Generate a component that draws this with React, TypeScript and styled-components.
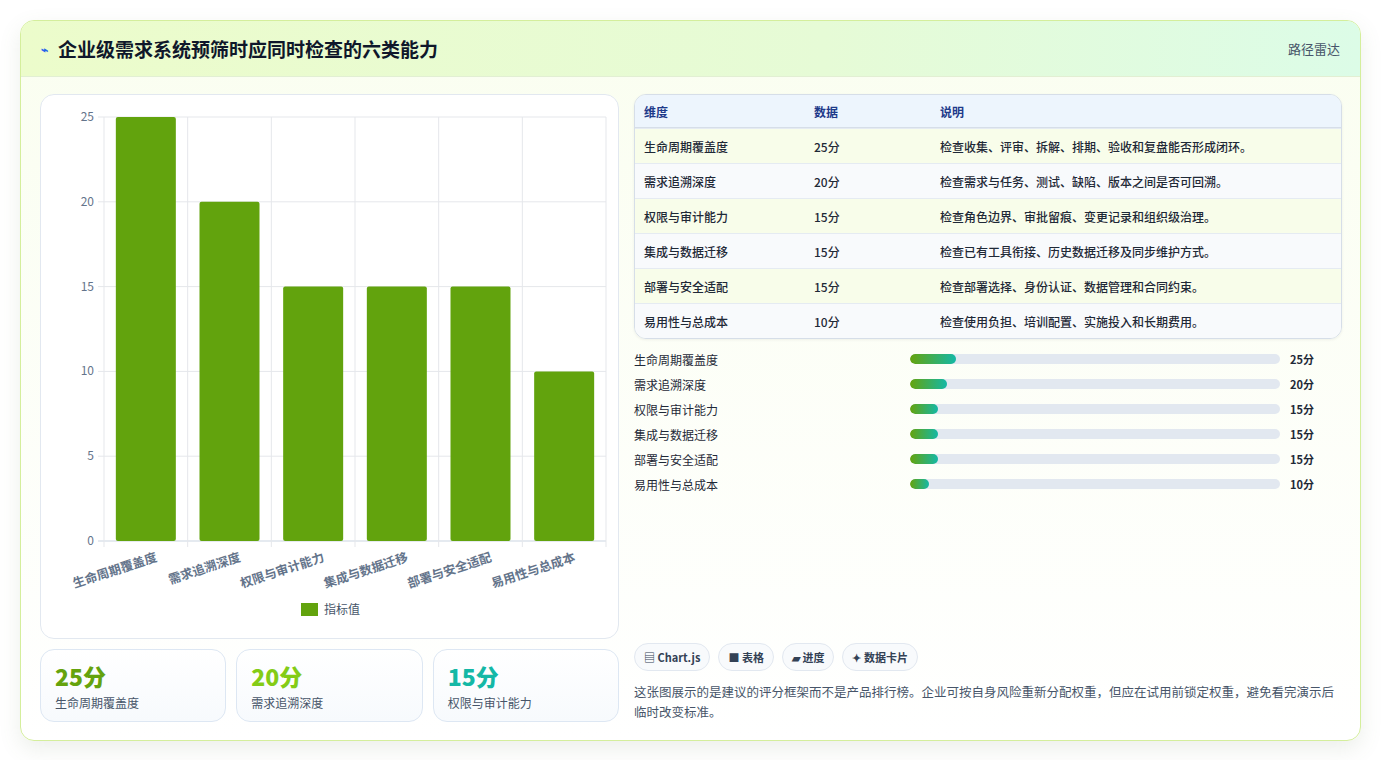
import { FC } from "react";
import styled, { createGlobalStyle } from "styled-components";

const GlobalStyle = createGlobalStyle`
  body {
    margin: 0;
    background: #fff;
    font-family: "Noto Sans CJK SC", "Noto Sans", sans-serif;
  }
`;

const items = [
  { name: "生命周期覆盖度", value: 25, desc: "检查收集、评审、拆解、排期、验收和复盘能否形成闭环。" },
  { name: "需求追溯深度", value: 20, desc: "检查需求与任务、测试、缺陷、版本之间是否可回溯。" },
  { name: "权限与审计能力", value: 15, desc: "检查角色边界、审批留痕、变更记录和组织级治理。" },
  { name: "集成与数据迁移", value: 15, desc: "检查已有工具衔接、历史数据迁移及同步维护方式。" },
  { name: "部署与安全适配", value: 15, desc: "检查部署选择、身份认证、数据管理和合同约束。" },
  { name: "易用性与总成本", value: 10, desc: "检查使用负担、培训配置、实施投入和长期费用。" },
];

const Page = styled.div`
  padding: 20px 20px 20px 20px;
`;

const Card = styled.div`
  border: 1px solid #d4ee9c;
  border-radius: 14px;
  overflow: hidden;
  background: linear-gradient(180deg, #fafef0 0%, #ffffff 100%);
  box-shadow: 0 8px 22px rgba(100, 120, 80, 0.12);
`;

const Header = styled.div`
  height: 55px;
  display: flex;
  align-items: center;
  justify-content: space-between;
  padding: 0 20px;
  background: linear-gradient(90deg, #ecfccb 0%, #e6fbd6 60%, #dcfce7 100%);
  border-bottom: 1px solid #e2efd3;
`;

const Title = styled.h1`
  margin: 0;
  font-size: 19px;
  font-weight: 700;
  color: #0f172a;
  display: flex;
  align-items: center;
  gap: 10px;
`;

const Glyph = styled.span`
  color: #2563eb;
  font-size: 12px;
`;

const HeaderTag = styled.span`
  font-size: 13px;
  color: #475569;
`;

const Body = styled.div`
  display: grid;
  grid-template-columns: 579px 708px;
  gap: 15px;
  padding: 17px 19px 18px 19px;
`;

const LeftCol = styled.div`
  display: flex;
  flex-direction: column;
  gap: 10px;
`;

const ChartBox = styled.div`
  height: 543px;
  background: #fff;
  border: 1px solid #e2e8f0;
  border-radius: 14px;
`;

const Stats = styled.div`
  display: grid;
  grid-template-columns: repeat(3, 1fr);
  gap: 10px;
`;

const Stat = styled.div`
  height: 73px;
  box-sizing: border-box;
  padding: 10px 14px;
  border: 1px solid #dde7f3;
  border-radius: 14px;
  background: linear-gradient(180deg, #ffffff, #f7fafd);
`;

const StatValue = styled.div<{ $c: string }>`
  font-size: 23px;
  font-weight: 800;
  color: ${(p) => p.$c};
  line-height: 32px;
`;

const StatLabel = styled.div`
  font-size: 12px;
  color: #475569;
  margin-top: 2px;
`;

const RightCol = styled.div`
  display: flex;
  flex-direction: column;
`;

const Table = styled.table`
  width: 100%;
  border-collapse: separate;
  border-spacing: 0;
  border: 1px solid #d6dee8;
  border-radius: 12px;
  overflow: hidden;
  font-size: 12px;
  box-shadow: 0 1px 3px rgba(0, 0, 0, 0.06);
`;

const Th = styled.th`
  text-align: left;
  font-weight: 600;
  color: #1e3a8a;
  background: #edf5fd;
  height: 32px;
  padding: 0 9px;
  border-bottom: 1px solid #d6dee8;
`;

const Tr = styled.tr<{ $alt: boolean }>`
  background: ${(p) => (p.$alt ? "#f8fafc" : "#f8fdea")};
`;

const Td = styled.td<{ $w?: string }>`
  height: 34px;
  padding: 0 9px;
  color: #1f2937;
  font-weight: 500;
  width: ${(p) => p.$w || "auto"};
  border-top: 1px solid #e5ebf2;
`;

const Bars = styled.div`
  display: flex;
  flex-direction: column;
  gap: 7px;
  margin-top: 11px;
`;

const BarRow = styled.div`
  display: grid;
  grid-template-columns: 266px 370px 1fr;
  align-items: center;
  gap: 10px;
  font-size: 12px;
  height: 18px;
  color: #1f2937;
`;

const Track = styled.div`
  height: 10px;
  border-radius: 5px;
  background: #e2e8f0;
  overflow: hidden;
`;

const Fill = styled.div`
  height: 100%;
  border-radius: 5px;
  background: linear-gradient(90deg, #65a30d, #14b8a6);
`;

const Score = styled.span`
  font-weight: 700;
  font-size: 11px;
`;

const Chips = styled.div`
  display: flex;
  gap: 8px;
  margin-top: auto;
`;

const Chip = styled.span`
  height: 28px;
  box-sizing: border-box;
  padding: 0 9px;
  display: inline-flex;
  align-items: center;
  border: 1px solid #e2e8f0;
  border-radius: 14px;
  background: #f8fafc;
  font-size: 11px;
  font-weight: 600;
  color: #334155;
`;

const Note = styled.p`
  margin: 11px 0 0;
  font-size: 12.5px;
  line-height: 20px;
  color: #475569;
`;

const W = 578;
const L = 63;
const R = 565;
const T = 22;
const B = 446;
const cw = (R - L) / 6;
const y = (v: number) => B - (v / 25) * (B - T);

const BarChart: FC = () => (
  <svg width={W} height={541} style={{ display: "block" }}>
    {[0, 5, 10, 15, 20, 25].map((v) => (
      <g key={v}>
        <line x1={L - 6} x2={R} y1={y(v)} y2={y(v)} stroke={v === 0 ? "#cbd5e1" : "#e5e7eb"} />
        <text x={L - 10} y={y(v) + 4} textAnchor="end" fontSize="12" fill="#64748b">{v}</text>
      </g>
    ))}
    {Array.from({ length: 7 }).map((_, i) => (
      <line key={i} x1={L + i * cw} x2={L + i * cw} y1={T} y2={B + 6} stroke="#e5e7eb" />
    ))}
    {items.map((it, i) => {
      const cx = L + cw * i + cw / 2;
      return (
        <g key={it.name}>
          <rect x={cx - 30} y={y(it.value)} width={60} height={B - y(it.value)} fill="#62a30d" rx="2" />
          <text
            x={cx + 12}
            y={B + 20}
            textAnchor="end"
            fontSize="12.5"
            fontWeight="600"
            fill="#64748b"
            transform={`rotate(-18 ${cx + 12} ${B + 20})`}
          >
            {it.name}
          </text>
        </g>
      );
    })}
    <rect x={260} y={508} width={17} height={13} fill="#62a30d" />
    <text x={283} y={519} fontSize="12" fill="#475569">指标值</text>
  </svg>
);

const App: FC = () => (
  <>
    <GlobalStyle />
    <Page>
      <Card>
        <Header>
          <Title>
            <Glyph>⌁</Glyph>企业级需求系统预筛时应同时检查的六类能力
          </Title>
          <HeaderTag>路径雷达</HeaderTag>
        </Header>
        <Body>
          <LeftCol>
            <ChartBox>
              <BarChart />
            </ChartBox>
            <Stats>
              <Stat>
                <StatValue $c="#65a30d">25分</StatValue>
                <StatLabel>生命周期覆盖度</StatLabel>
              </Stat>
              <Stat>
                <StatValue $c="#84cc16">20分</StatValue>
                <StatLabel>需求追溯深度</StatLabel>
              </Stat>
              <Stat>
                <StatValue $c="#14b8a6">15分</StatValue>
                <StatLabel>权限与审计能力</StatLabel>
              </Stat>
            </Stats>
          </LeftCol>
          <RightCol>
            <Table>
              <thead>
                <tr>
                  <Th>维度</Th>
                  <Th>数据</Th>
                  <Th>说明</Th>
                </tr>
              </thead>
              <tbody>
                {items.map((it, i) => (
                  <Tr key={it.name} $alt={i % 2 === 1}>
                    <Td $w="152px">{it.name}</Td>
                    <Td $w="108px">{it.value}分</Td>
                    <Td>{it.desc}</Td>
                  </Tr>
                ))}
              </tbody>
            </Table>
            <Bars>
              {items.map((it) => (
                <BarRow key={it.name}>
                  <span>{it.name}</span>
                  <Track>
                    <Fill style={{ width: `${it.value * 0.5}%` }} />
                  </Track>
                  <Score>{it.value}分</Score>
                </BarRow>
              ))}
            </Bars>
            <Chips>
              <Chip>▤ Chart.js</Chip>
              <Chip>■ 表格</Chip>
              <Chip>▰ 进度</Chip>
              <Chip>✦ 数据卡片</Chip>
            </Chips>
            <Note>
              这张图展示的是建议的评分框架而不是产品排行榜。企业可按自身风险重新分配权重，但应在试用前锁定权重，避免看完演示后临时改变标准。
            </Note>
          </RightCol>
        </Body>
      </Card>
    </Page>
  </>
);

export default App;
